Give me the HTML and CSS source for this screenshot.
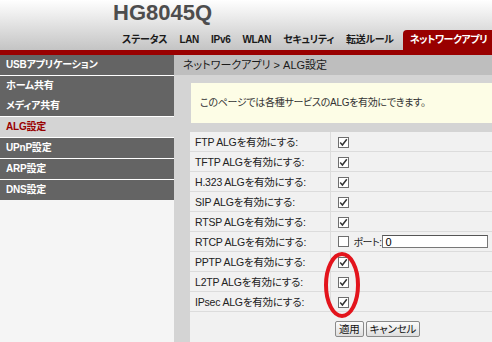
FILE: index.html
```html
<!DOCTYPE html>
<html lang="ja">
<head>
  <meta charset="UTF-8">
  <title>ALG設定</title>
  <link rel="stylesheet" href="styles.css">
</head>
<body>
  <div class="page">
    <div class="header">
      <div class="brand">HG8045Q</div>
      <ul class="tabs">
        <li>ステータス</li>
        <li>LAN</li>
        <li>IPv6</li>
        <li>WLAN</li>
        <li>セキュリティ</li>
        <li>転送ルール</li>
        <li class="active">ネットワークアプリ</li>
      </ul>
    </div>
    <div class="redbar"></div>
    <div class="body">
      <ul class="side">
        <li class="sep">USBアプリケーション</li>
        <li>ホーム共有</li>
        <li class="sep">メディア共有</li>
        <li class="sep current">ALG設定</li>
        <li class="sep">UPnP設定</li>
        <li class="sep">ARP設定</li>
        <li>DNS設定</li>
      </ul>
      <div class="main">
        <div class="crumb">ネットワークアプリ &gt; ALG設定</div>
        <div class="content">
          <div class="notice">このページでは各種サービスのALGを有効にできます。</div>
          <div class="panel">
            <table class="alg">
              <colgroup>
                <col class="c-lbl">
                <col>
              </colgroup>
              <tbody id="algRows">
                <!-- 行はスクリプトで追加 -->
              </tbody>
            </table>
            <div class="btns">
              <button type="button" class="btn">適用</button>
              <button type="button" class="btn">キャンセル</button>
            </div>
            <svg class="mark" width="40" height="70" viewBox="0 0 40 70">
              <ellipse cx="20" cy="35" rx="16" ry="31" fill="none" stroke="#e3141c" stroke-width="4"/>
            </svg>
          </div>
        </div>
      </div>
    </div>
  </div>
  <script>
    // ALG一覧
    const algs = [
      { name: "FTP", on: true },
      { name: "TFTP", on: true },
      { name: "H.323", on: true },
      { name: "SIP", on: true },
      { name: "RTSP", on: true },
      { name: "RTCP", on: false, port: true },
      { name: "PPTP", on: true },
      { name: "L2TP", on: true },
      { name: "IPsec", on: true }
    ];

    const check = '<svg width="9" height="9" viewBox="0 0 9 9"><path d="M1.2 4.6 L3.4 7 L7.8 1.3" fill="none" stroke="#333" stroke-width="1.5"/></svg>';

    const rows = document.getElementById('algRows');
    algs.forEach(a => {
      const tr = document.createElement('tr');
      tr.innerHTML = `
        <td class="lbl">${a.name} ALGを有効にする:</td>
        <td class="val">
          <span class="cb">${a.on ? check : ''}</span>${a.port ? '<span class="port">ポート:</span><input type="text" class="port-in" value="0">' : ''}
        </td>
      `;
      rows.appendChild(tr);
    });
  </script>
</body>
</html>
```

FILE: styles.css
```css
html, body {
  margin: 0;
  padding: 0;
  height: 100%;
}
body {
  font-family: "Liberation Sans", "Noto Sans CJK JP", sans-serif;
  font-size: 11px;
  color: #222;
  overflow: hidden;
  background: #d4d4d4;
  font-feature-settings: "palt";
}
.page {
  height: 342px;
  display: flex;
  flex-direction: column;
}
.header {
  height: 50px;
  background: linear-gradient(#ffffff, #c4c4c4);
  box-sizing: border-box;
  padding-left: 113px;
}
.brand {
  font-size: 22px;
  line-height: 26px;
  font-weight: bold;
  color: #4d4d4d;
}
.tabs {
  list-style: none;
  margin: 4px 0 0 0;
  padding: 0 0 0 3px;
  display: flex;
  height: 20px;
}
.tabs li {
  font-size: 10px;
  font-weight: bold;
  color: #1a1a1a;
  line-height: 20px;
  padding: 0 6px;
  white-space: nowrap;
  letter-spacing: -0.3px;
}
.tabs li.active {
  margin-left: 3px;
  background: #990000;
  color: #fff;
  border-radius: 4px 4px 0 0;
  padding: 0 8px 0 7px;
  letter-spacing: -0.5px;
}
.redbar {
  height: 5px;
  background: #990000;
}
.body {
  flex: 1;
  display: flex;
  min-height: 0;
}
.side {
  list-style: none;
  margin: 0;
  padding: 0;
  width: 174px;
  background: #f5f5f5;
}
.side li {
  height: 20px;
  line-height: 20px;
  background: #646464;
  color: #fff;
  font-size: 10px;
  font-weight: bold;
  padding-left: 6px;
  white-space: nowrap;
  letter-spacing: -0.2px;
}
.side li.sep {
  border-bottom: 1px solid #fff;
}
.side li.current {
  background: #d4d4d4;
  color: #990000;
}
.main {
  flex: 1;
  display: flex;
  flex-direction: column;
  background: #d4d4d4;
  min-width: 0;
}
.crumb {
  height: 20px;
  line-height: 20px;
  background: #bebebe;
  padding-left: 9px;
  color: #1a1a1a;
  white-space: nowrap;
}
.content {
  flex: 1;
  display: flex;
  flex-direction: column;
  padding: 8px 0 0 16px;
}
.notice {
  margin-left: 1px;
  height: 40px;
  line-height: 40px;
  background: #fdfde6;
  padding-left: 9px;
  color: #333;
  font-size: 10px;
  letter-spacing: -0.3px;
  white-space: nowrap;
}
.panel {
  position: relative;
  flex: 1;
  margin-top: 9px;
  background: #f1f1f1;
}
.alg {
  width: 100%;
  border-collapse: collapse;
  table-layout: fixed;
}
.c-lbl {
  width: 140px;
}
.alg td {
  height: 19px;
  padding: 0;
  border-bottom: 1px solid #dcdcdc;
  white-space: nowrap;
  vertical-align: middle;
}
.alg .lbl {
  padding-left: 5px;
  border-right: 1px solid #dcdcdc;
  color: #222;
  font-size: 10.5px;
  letter-spacing: -0.2px;
}
.alg .val {
  padding-left: 7px;
}
.cb {
  display: inline-flex;
  align-items: center;
  justify-content: center;
  width: 9px;
  height: 9px;
  border: 1px solid #6e6e6e;
  background: #fff;
  vertical-align: middle;
}
.port {
  margin-left: 5px;
  font-size: 10px;
  letter-spacing: -0.5px;
  vertical-align: middle;
}
.port-in {
  width: 106px;
  height: 13px;
  box-sizing: border-box;
  border: 1px solid #777;
  border-top-color: #555;
  padding: 0 2px;
  font: inherit;
  font-size: 11px;
  vertical-align: middle;
  margin-left: 1px;
}
.btns {
  padding: 9px 0 0 145px;
  display: flex;
  gap: 2px;
}
.btn {
  font: inherit;
  font-size: 10.5px;
  height: 16px;
  line-height: 14px;
  padding: 0 3px;
  border: 1px solid #8a8a8a;
  border-radius: 2px;
  background: linear-gradient(#fbfbfb, #dedede);
  color: #111;
  letter-spacing: -0.2px;
}
.mark {
  position: absolute;
  left: 132px;
  top: 118px;
}
```
